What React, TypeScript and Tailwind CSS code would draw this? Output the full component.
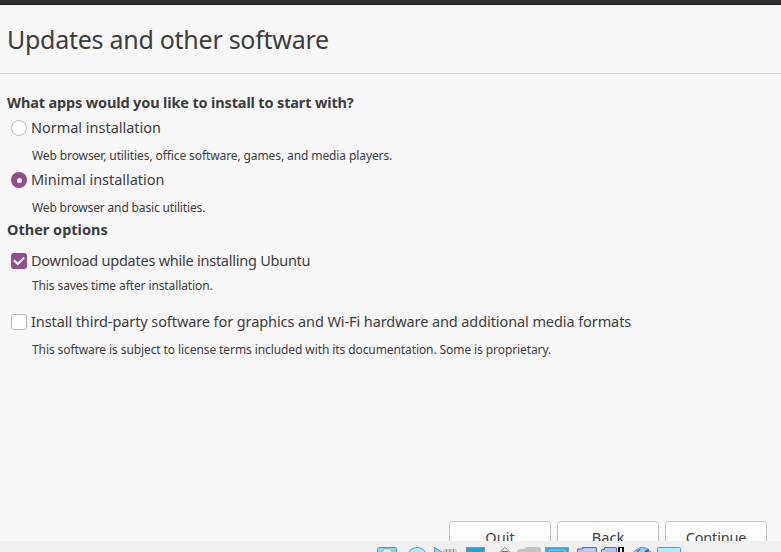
import type { ReactNode } from "react";

function Hint({ children, className }: { children: ReactNode; className: string }) {
  return (
    <p className={`ml-8 h-4 w-max whitespace-nowrap text-[12px] leading-4 ${className}`}>{children}</p>
  );
}

function Option({ control, children, className }: { control: ReactNode; children: ReactNode; className: string }) {
  return (
    <label className="ml-[11px] flex h-5 w-max items-center gap-1 whitespace-nowrap text-[14.5px] leading-5">
      {control}
      <span className={`pb-[2px] ${className}`}>{children}</span>
    </label>
  );
}

function Radio({ selected = false }: { selected?: boolean }) {
  return selected ? (
    <span className="flex size-4 items-center justify-center rounded-full bg-[#924d8b]">
      <span className="size-[5px] rounded-full bg-white" />
    </span>
  ) : (
    <span className="size-4 rounded-full border border-[#b9b9b9] bg-white" />
  );
}

function Checkbox({ checked = false }: { checked?: boolean }) {
  return checked ? (
    <span className="size-4 rounded-[3px] bg-[#924d8b]">
      <svg viewBox="0 0 16 16" className="size-4" fill="none" stroke="#fff" strokeWidth="2">
        <path d="M3 7.3 6.7 11 13.2 4.6" />
      </svg>
    </span>
  ) : (
    <span className="size-4 rounded-[3px] border border-[#b9b9b9] bg-white" />
  );
}

function WizardButton({ children, className }: { children: ReactNode; className: string }) {
  return (
    <button className="flex h-[34px] w-[102px] items-center justify-center rounded-[4px] border border-[#c4c4c4] bg-[#fdfdfd] text-[14.5px] leading-5">
      <span className={`pb-[2px] ${className}`}>{children}</span>
    </button>
  );
}

function StatusIcons() {
  return (
    <svg viewBox="370 541 320 11" className="ml-[370px] h-[11px] w-80" fill="none">
      <rect x="377.5" y="547.5" width="19" height="12" rx="1" fill="#83d9fb" stroke="#4c91d7" />
      <circle cx="387" cy="554" r="5.5" fill="#e8f6fc" stroke="#65aee1" />
      <circle cx="417" cy="557.5" r="10" fill="#a6eeff" stroke="#559bdc" />
      <path d="M434.5 547.5v8h10v-2z" fill="#8ed7fa" stroke="#4b96dd" />
      <path d="M443 553v-2q0-2 3-2h8q3 0 3 2v2" fill="#cecece" />
      <path d="M446.5 549v3M450 549v3M453.5 549v3" stroke="#8f9496" />
      <rect x="466.5" y="547.5" width="18" height="12" fill="#16a5e5" stroke="#8b969b" />
      <path d="m498 554 7-6.5 7 6.5" fill="#f7f7f7" stroke="#8d8d8d" />
      <path d="M502 553v-1.5h6v1.5" stroke="#777" />
      <path d="M517 552q0-3 4-3h3q1-2 3-2h12q2 0 2 2v3" fill="#c3c3c3" />
      <rect x="545.5" y="547.5" width="23" height="12" fill="#21b0ef" stroke="#8ba1ab" />
      <path d="M549 552v-2h16v2" stroke="#70d9fb" />
      <path d="M577.5 553v-4h5v-1.5h14v5.5" fill="#a6cafa" stroke="#5270cb" />
      <path d="M584 550h10" stroke="#c9e4ff" />
      <path d="M601.5 553v-3.5h3v-2h12v5" fill="#a6cafa" stroke="#5270cb" />
      <path d="M618 552v-5h6v5" fill="#000" />
      <path d="M620 548h2v4h-2z" fill="#fff" />
      <circle cx="642.5" cy="557.5" r="10" fill="#86d8f8" stroke="#5688c5" />
      <path d="m637 551.5 3-2M645 551.5l3-1.5v2" stroke="#316fa9" strokeWidth="1.5" />
      <rect x="657.5" y="547.5" width="23" height="12" rx="1" fill="#a2efff" stroke="#5594d8" />
    </svg>
  );
}

export default function App() {
  return (
    <main className="flex h-[552px] w-[781px] flex-col overflow-hidden bg-[#f7f7f7] font-['Noto_Sans',sans-serif] text-[#3d3d3d]">
      <div className="h-[5px] shrink-0 border-b border-[#1d1b1c] bg-[#302d2e]" />
      <header className="flex h-[69px] shrink-0 items-center border-b border-[#dadada] pl-[7px]">
        <h1 className="whitespace-nowrap text-[25px] leading-8 tracking-[-0.27px]">Updates and other software</h1>
      </header>
      <section className="flex h-[447px] shrink-0 flex-col pt-[18px]">
        <h2 className="ml-[7px] h-5 w-max whitespace-nowrap text-[14.5px] font-bold leading-5 tracking-[-0.145px]">What apps would you like to install to start with?</h2>
        <div className="mt-[6px]">
          <Option control={<Radio />} className="tracking-[-0.02px]">Normal installation</Option>
        </div>
        <div className="mt-[10px]">
          <Hint className="tracking-[-0.1px]">Web browser, utilities, office software, games, and media players.</Hint>
        </div>
        <div className="mt-[6px]">
          <Option control={<Radio selected />} className="tracking-[-0.04px]">Minimal installation</Option>
        </div>
        <div className="mt-[10px]">
          <Hint className="tracking-[-0.15px]">Web browser and basic utilities.</Hint>
        </div>
        <h2 className="ml-[7px] mt-[3px] h-5 w-max whitespace-nowrap text-[14.5px] font-bold leading-5">Other options</h2>
        <div className="mt-[12px]">
          <Option control={<Checkbox checked />} className="tracking-[-0.245px]">Download updates while installing Ubuntu</Option>
        </div>
        <div className="mt-[7px]">
          <Hint className="tracking-[-0.11px]">This saves time after installation.</Hint>
        </div>
        <div className="mt-[18px]">
          <Option control={<Checkbox />} className="tracking-[-0.09px]">Install third-party software for graphics and Wi-Fi hardware and additional media formats</Option>
        </div>
        <div className="mt-[10px]">
          <Hint className="tracking-[-0.09px]">This software is subject to license terms included with its documentation. Some is proprietary.</Hint>
        </div>
      </section>
      <div className="flex h-5 shrink-0 items-start justify-end gap-[6px] overflow-hidden pr-[14px]">
        <WizardButton className="">Quit</WizardButton>
        <WizardButton className="">Back</WizardButton>
        <WizardButton className="tracking-[-0.2px]">Continue</WizardButton>
      </div>
      <footer className="h-[11px] shrink-0 bg-[#f0f0f0]">
        <StatusIcons />
      </footer>
    </main>
  );
}
